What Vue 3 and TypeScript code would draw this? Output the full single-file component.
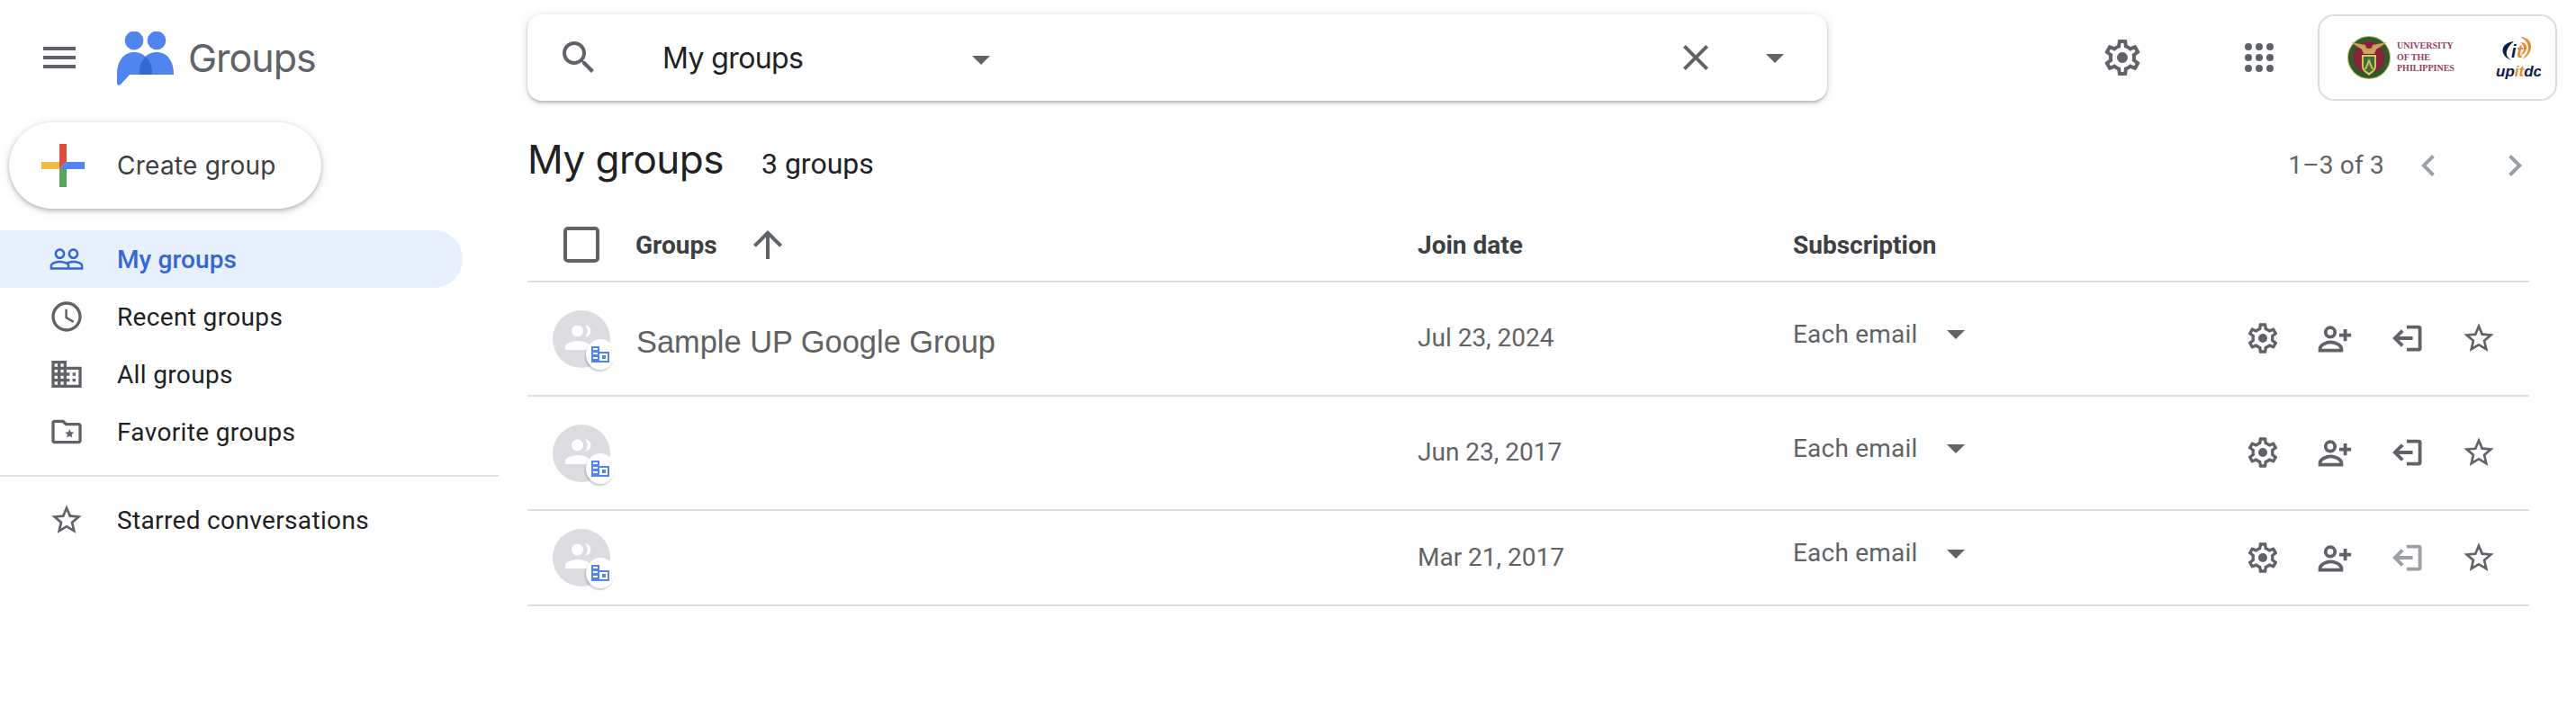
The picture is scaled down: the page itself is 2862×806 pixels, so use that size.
<script setup lang="ts">
const P = {
  menu: 'M3 18h18v-2H3v2zm0-5h18v-2H3v2zm0-7v2h18V6H3z',
  search: 'M15.5 14h-.79l-.28-.27C15.41 12.59 16 11.11 16 9.5 16 5.91 13.09 3 9.5 3S3 5.91 3 9.5 5.91 16 9.5 16c1.61 0 3.09-.59 4.23-1.57l.27.28v.79l5 4.99L20.49 19l-4.99-5zm-6 0C7.01 14 5 11.99 5 9.5S7.01 5 9.5 5 14 7.01 14 9.5 11.99 14 9.5 14z',
  close: 'M19 6.41L17.59 5 12 10.59 6.41 5 5 6.41 10.59 12 5 17.59 6.41 19 12 13.41 17.59 19 19 17.59 13.41 12z',
  drop: 'M7 10l5 5 5-5z',
  gear: 'M19.43 12.98c.04-.32.07-.64.07-.98 0-.34-.03-.66-.07-.98l2.11-1.65c.19-.15.24-.42.12-.64l-2-3.46c-.09-.16-.26-.25-.44-.25-.06 0-.12.01-.17.03l-2.49 1c-.52-.4-1.08-.73-1.69-.98l-.38-2.65C14.46 2.18 14.25 2 14 2h-4c-.25 0-.46.18-.49.42l-.38 2.65c-.61.25-1.17.59-1.69.98l-2.49-1c-.06-.02-.12-.03-.18-.03-.17 0-.34.09-.43.25l-2 3.46c-.13.22-.07.49.12.64l2.11 1.65c-.04.32-.07.65-.07.98 0 .33.03.66.07.98l-2.11 1.65c-.19.15-.24.42-.12.64l2 3.46c.09.16.26.25.44.25.06 0 .12-.01.17-.03l2.49-1c.52.4 1.08.73 1.69.98l.38 2.65c.03.24.24.42.49.42h4c.25 0 .46-.18.49-.42l.38-2.65c.61-.25 1.17-.59 1.69-.98l2.49 1c.06.02.12.03.18.03.17 0 .34-.09.43-.25l2-3.46c.12-.22.07-.49-.12-.64l-2.11-1.65zm-1.98-1.71c.04.31.05.52.05.73 0 .21-.02.43-.05.73l-.14 1.13.89.7 1.08.84-.7 1.21-1.27-.51-1.04-.42-.9.68c-.43.32-.84.56-1.25.73l-1.06.43-.16 1.13-.2 1.35h-1.4l-.19-1.35-.16-1.13-1.06-.43c-.43-.18-.83-.41-1.23-.71l-.91-.7-1.06.43-1.27.51-.7-1.21 1.08-.84.89-.7-.14-1.13c-.03-.31-.05-.54-.05-.74s.02-.43.05-.73l.14-1.13-.89-.7-1.08-.84.7-1.21 1.27.51 1.04.42.9-.68c.43-.32.84-.56 1.25-.73l1.06-.43.16-1.13.2-1.35h1.39l.19 1.35.16 1.13 1.06.43c.43.18.83.41 1.23.71l.91.7 1.06-.43 1.27-.51.7 1.21-1.07.85-.89.7.14 1.13zM12 9a3 3 0 1 0 0 6 3 3 0 0 0 0-6z',
  prev: 'M15.41 7.41L14 6l-6 6 6 6 1.41-1.41L10.83 12z',
  next: 'M10 6L8.59 7.41 13.17 12l-4.58 4.59L10 18l6-6z',
  up: 'M4 12l1.41 1.41L11 7.83V20h2V7.83l5.58 5.59L20 12l-8-8-8 8z',
  star: 'M22 9.24l-7.19-.62L12 2 9.19 8.63 2 9.24l5.46 4.73L5.82 21 12 17.27 18.18 21l-1.63-7.03L22 9.24zM12 15.4l-3.76 2.27 1-4.28-3.32-2.88 4.38-.38L12 6.1l1.71 4.04 4.38.38-3.32 2.88 1 4.28L12 15.4z',
  people: 'M16.5 13c-1.2 0-3.07.34-4.5 1-1.43-.67-3.3-1-4.5-1C5.33 13 1 14.08 1 16.25V19h22v-2.75c0-2.17-4.33-3.25-6.5-3.25zm-4 4.5h-10v-1.25c0-.54 2.56-1.75 5-1.75s5 1.21 5 1.75v1.25zm9 0H14v-1.25c0-.46-.2-.86-.52-1.22.88-.3 1.96-.53 3.02-.53 2.44 0 5 1.21 5 1.75v1.25zM7.5 12c1.93 0 3.5-1.57 3.5-3.5S9.43 5 7.5 5 4 6.57 4 8.5 5.57 12 7.5 12zm0-5.5c1.1 0 2 .9 2 2s-.9 2-2 2-2-.9-2-2 .9-2 2-2zm9 5.5c1.93 0 3.5-1.57 3.5-3.5S18.43 5 16.5 5 13 6.57 13 8.5s1.57 3.5 3.5 3.5zm0-5.5c1.1 0 2 .9 2 2s-.9 2-2 2-2-.9-2-2 .9-2 2-2z',
  clock: 'M11.99 2C6.47 2 2 6.48 2 12s4.47 10 9.99 10C17.52 22 22 17.52 22 12S17.52 2 11.99 2zM12 20c-4.42 0-8-3.58-8-8s3.58-8 8-8 8 3.58 8 8-3.58 8-8 8zm.5-13H11v6l5.25 3.15.75-1.23-4.5-2.67z',
  domain: 'M12 7V3H2v18h20V7H12zM6 19H4v-2h2v2zm0-4H4v-2h2v2zm0-4H4V9h2v2zm0-4H4V5h2v2zm4 12H8v-2h2v2zm0-4H8v-2h2v2zm0-4H8V9h2v2zm0-4H8V5h2v2zm10 12h-8v-2h2v-2h-2v-2h2v-2h-2V9h8v10zm-2-8h-2v2h2v-2zm0 4h-2v2h2v-2z',
  folder: 'M20 6h-8l-2-2H4c-1.1 0-2 .9-2 2v12c0 1.1.9 2 2 2h16c1.1 0 2-.9 2-2V8c0-1.1-.9-2-2-2zm0 12H4V6h5.17l2 2H20v10zM14 10.2l.85 2 2.15.2-1.63 1.4.5 2.1-1.87-1.12-1.87 1.12.5-2.1L11 12.4l2.15-.2z',
}

const nav = [
  { label: 'Recent groups', icon: P.clock },
  { label: 'All groups', icon: P.domain },
  { label: 'Favorite groups', icon: P.folder },
]

const rows = [
  { name: 'Sample UP Google Group', date: 'Jul 23, 2024', canLeave: true },
  { name: '', date: 'Jun 23, 2017', canLeave: true },
  { name: '', date: 'Mar 21, 2017', canLeave: false },
]

const dots = [6, 12, 18]
</script>

<template>
  <div class="page">
    <aside class="side">
      <div class="brand">
        <button class="iconbox menu" aria-label="Main menu">
          <svg viewBox="0 0 24 24" class="i48"><path :d="P.menu" /></svg>
        </button>
        <svg class="logo" viewBox="0 0 63 60" aria-hidden="true">
          <circle cx="19" cy="10" r="10.4" fill="#5084ee" />
          <circle cx="44" cy="10" r="10.3" fill="#5084ee" />
          <path d="M0 48C0 32 8 23 19 23c12 0 20 10 20 25H14L4 59c-2 1.500-4 .5-4-2z" fill="#5084ee" />
          <path d="M24 48c0-15 8-25 20-25s19 10 19 25z" fill="#5084ee" />
          <path d="M32 28c4 4 7 10 7 16v4H25v-4c0-6 3-12 7-16z" fill="#3367d6" />
        </svg>
        <span class="brand-name">Groups</span>
      </div>
      <button class="create">
        <svg class="plus" viewBox="0 0 48 48" aria-hidden="true">
          <polygon points="20,0 28,0 28,20 20,28" fill="#d9503f" />
          <polygon points="28,20 48,20 48,28 20,28" fill="#5084ee" />
          <polygon points="20,28 28,28 28,48 20,48" fill="#5aa55a" />
          <polygon points="0,20 20,20 20,28 0,28" fill="#f0bd44" />
        </svg>
        <span>Create group</span>
      </button>
      <nav class="nav">
        <a class="nav-item active">
          <span class="iconbox"><svg viewBox="0 0 24 24" class="i40"><path :d="P.people" /></svg></span>
          <span>My groups</span>
        </a>
        <a v-for="item in nav" :key="item.label" class="nav-item">
          <span class="iconbox"><svg viewBox="0 0 24 24" class="i40"><path :d="item.icon" /></svg></span>
          <span>{{ item.label }}</span>
        </a>
      </nav>
      <div class="divider"></div>
      <a class="nav-item">
        <span class="iconbox"><svg viewBox="0 0 24 24" class="i40"><path :d="P.star" /></svg></span>
        <span>Starred conversations</span>
      </a>
    </aside>

    <main class="main">
      <header class="top">
        <div class="searchbar">
          <span class="iconbox"><svg viewBox="0 0 24 24" class="i48"><path :d="P.search" /></svg></span>
          <div class="scope">
            <span>My groups</span>
            <span class="iconbox low"><svg viewBox="0 0 24 24" class="i48"><path :d="P.drop" /></svg></span>
          </div>
          <span class="iconbox clear"><svg viewBox="0 0 24 24" class="i48"><path :d="P.close" /></svg></span>
          <span class="iconbox"><svg viewBox="0 0 24 24" class="i48"><path :d="P.drop" /></svg></span>
        </div>
        <span class="iconbox settings"><svg viewBox="0 0 24 24" class="i48"><path :d="P.gear" /></svg></span>
        <span class="iconbox apps">
          <svg viewBox="0 0 24 24" class="i48">
            <template v-for="y in dots" :key="y">
              <circle v-for="x in dots" :key="x" :cx="x" :cy="y" r="2" />
            </template>
          </svg>
        </span>
        <div class="org">
          <svg class="seal" viewBox="0 0 48 48" aria-hidden="true">
            <circle cx="24" cy="24" r="24" fill="#c9b458" />
            <circle cx="24" cy="24" r="23" fill="#2f5a2c" />
            <circle cx="24" cy="24" r="17.500" fill="#8a1f3c" />
            <path d="M4 7l16 3 4-3 4 3 16-3-12 8-2 5h-12l-2-5z" fill="#c9a35a" />
            <circle cx="24" cy="10" r="4" fill="#8a1f3c" />
            <path d="M16 21h16v13c0 4-4 7-8 10-4-3-8-6-8-10z" fill="#d8c35c" />
            <path d="M18 23h12v11c0 3-3 5-6 7-3-2-6-4-6-7z" fill="#3f6d36" />
            <path d="M24 25l5 12h-2l-3-7-3 7h-2z" fill="#d8c35c" />
          </svg>
          <div class="org-text">
            <span>UNIVERSITY</span>
            <span>OF THE</span>
            <span>PHILIPPINES</span>
          </div>
          <svg class="itdc" viewBox="0 0 50 48" aria-hidden="true">
            <path d="M20 6C11 7 6 12 8 19c1 3 4 6 9 8-4-3-6-6-5-10 1-4 4-8 8-11z" fill="#101b4c" />
            <path d="M27 1c8 0 12 5 12 11 0 6-4 11-10 14 4-4 7-8 7-13 0-5-3-9-9-12z" fill="#e68a2e" />
            <path d="M27 7c5 0 7 3 7 6 0 4-3 7-7 9 2-3 4-5 4-8s-1-5-4-7z" fill="#e68a2e" />
            <text x="17" y="24" class="itdc-mark">i</text>
            <text x="23" y="24" class="itdc-mark orange">t</text>
            <text x="0" y="45" class="itdc-word">up<tspan fill="#e68a2e">it</tspan>dc</text>
          </svg>
        </div>
      </header>

      <div class="title-row">
        <h1>My groups</h1>
        <span class="count">3 groups</span>
        <div class="pager">
          <span class="range">1–3 of 3</span>
          <span class="iconbox soft"><svg viewBox="0 0 24 24" class="i48"><path :d="P.prev" /></svg></span>
          <span class="iconbox soft"><svg viewBox="0 0 24 24" class="i48"><path :d="P.next" /></svg></span>
        </div>
      </div>

      <div class="table">
        <div class="row head">
          <div class="cell-name">
            <span class="check"></span>
            <span class="head-label">Groups</span>
            <span class="iconbox sort"><svg viewBox="0 0 24 24" class="i48"><path :d="P.up" /></svg></span>
          </div>
          <div>Join date</div>
          <div>Subscription</div>
          <div></div>
        </div>
        <div v-for="row in rows" :key="row.date" class="row body">
          <div class="cell-name">
            <div class="avatar">
              <svg viewBox="0 0 64 64" class="avatar-art" aria-hidden="true">
                <circle cx="27.500" cy="23" r="6.500" fill="#fff" />
                <path d="M36 16.500a6.500 6.500 0 0 1 0 13c1.800-1.800 2.700-4 2.700-6.500s-.9-4.700-2.700-6.500z" fill="#fff" />
                <path d="M14 44v-3c0-5 9-7 14-7s14 2 14 7v3z" fill="#fff" />
              </svg>
              <span class="badge">
                <svg viewBox="0 0 20 18" class="badge-art" aria-hidden="true">
                  <path fill-rule="evenodd" d="M0 0h9v6h11v12H0zM2 2v2h5V2zM2 7v2h5V7zM2 12v2h5v-2zM9 8v8h9V8zM12 10h4v4h-4z" />
                </svg>
              </span>
            </div>
            <span class="group-name">{{ row.name }}</span>
          </div>
          <div class="date">{{ row.date }}</div>
          <div class="sub">
            <span>Each email</span>
            <span class="iconbox"><svg viewBox="0 0 24 24" class="i48"><path :d="P.drop" /></svg></span>
          </div>
          <div class="actions">
            <span class="iconbox"><svg viewBox="0 0 24 24" class="i40"><path :d="P.gear" /></svg></span>
            <span class="iconbox">
              <svg viewBox="0 0 24 24" class="line">
                <circle cx="9.500" cy="8.700" r="2.600" />
                <path d="M3.800 18.800v-.9c0-2.300 3.800-3.700 5.900-3.700s6 1.400 6 3.700v.9z" />
                <path d="M17.800 7v6.600M14.500 10.300h6.600" />
              </svg>
            </span>
            <span class="iconbox" :class="{ disabled: !row.canLeave }">
              <svg viewBox="0 0 24 24" class="line">
                <path d="M12 5.800h6.600c.4 0 .7.300.7.700v11.100c0 .4-.3.700-.7.700H12" />
                <path d="M15.300 12H5.500M9.600 7.800 5.400 12l4.200 4.200" />
              </svg>
            </span>
            <span class="iconbox"><svg viewBox="0 0 24 24" class="i40"><path :d="P.star" /></svg></span>
          </div>
        </div>
      </div>
    </main>
  </div>
</template>

<style>
html, body { margin: 0; background: #fff; overflow: hidden; }
</style>

<style scoped>
.page {
  display: flex;
  width: 2862px;
  height: 806px;
  overflow: hidden;
  background: #fff;
  color: #202124;
  font-family: Roboto, "Liberation Sans", sans-serif;
  font-size: 28px;
}
button { border: 0; background: none; padding: 0; font: inherit; color: inherit; }
svg { fill: #5f6368; display: block; }
.iconbox { display: flex; align-items: center; justify-content: center; width: 48px; height: 48px; flex: none; }
.i48 { width: 48px; height: 48px; }
.i40 { width: 40px; height: 40px; }
.line { width: 48px; height: 48px; fill: none; stroke: #5f6368; stroke-width: 1.9; }
.disabled .line { stroke: #9aa0a6; }
.soft svg { fill: #9aa0a6; }

.side { width: 586px; flex: none; }
.brand { display: flex; align-items: center; height: 128px; padding-left: 42px; }
.logo { width: 63px; height: 60px; margin-left: 40px; margin-top: 2px; }
.brand-name { margin-left: 16px; font-family: Inter, sans-serif; font-size: 43px; color: #5f6368; letter-spacing: -1px; }
.create {
  display: flex;
  align-items: center;
  width: 347px;
  height: 96px;
  margin: 8px 0 0 10px;
  padding-left: 36px;
  border-radius: 48px;
  background: #fff;
  box-shadow: 0 2px 4px rgba(60, 64, 67, .3), 0 2px 8px 2px rgba(60, 64, 67, .12);
  box-sizing: border-box;
  font-family: Inter, sans-serif;
  letter-spacing: .25px;
  color: #3c4043;
}
.plus { width: 48px; height: 48px; margin-right: 36px; }
.nav { margin-top: 24px; }
.nav-item { display: flex; align-items: center; width: 514px; height: 64px; padding-left: 50px; box-sizing: border-box; gap: 32px; letter-spacing: .35px; }
.nav-item.active { background: #e8f0fe; border-radius: 0 32px 32px 0; color: #3367d6; font-weight: 500; letter-spacing: .1px; }
.nav-item.active svg { fill: #3367d6; }
.divider { width: 554px; height: 2px; margin: 16px 0; background: #e0e0e0; }

.main { flex: 1; min-width: 0; padding-right: 52px; box-sizing: border-box; }
.top { display: flex; align-items: flex-start; height: 128px; padding-top: 16px; box-sizing: border-box; width: 2276px; }
.searchbar {
  display: flex;
  align-items: center;
  width: 1444px;
  height: 96px;
  padding: 0 34px 0 33px;
  box-sizing: border-box;
  border-radius: 16px;
  background: #fff;
  box-shadow: 0 2px 3px rgba(60, 64, 67, .3), 0 1px 8px 1px rgba(60, 64, 67, .15);
  font-family: Inter, sans-serif;
  font-size: 32px;
}
.scope { display: flex; align-items: center; justify-content: space-between; width: 378px; margin-left: 69px; letter-spacing: -.6px; }
.low { margin-top: 4px; }
.clear { margin-left: auto; margin-right: 40px; }
.settings { margin: 24px 0 0 304px; }
.apps { margin: 24px 0 0 104px; }
.org {
  display: flex;
  align-items: center;
  width: 266px;
  height: 96px;
  margin-left: 41px;
  padding-left: 31px;
  box-sizing: border-box;
  border: 2px solid #dadce0;
  border-radius: 18px;
}
.seal { width: 48px; height: 48px; margin-right: 7px; }
.org-text { display: flex; flex-direction: column; width: 110px; font-family: "Liberation Serif", serif; font-size: 10px; line-height: 12.500px; font-weight: 700; color: #94415f; }
.itdc { width: 50px; height: 48px; }
.itdc-mark { font-family: "Liberation Sans", sans-serif; font-style: italic; font-weight: 700; font-size: 20px; fill: #101b4c; }
.itdc-mark.orange { fill: #e68a2e; }
.itdc-word { font-family: "Liberation Sans", sans-serif; font-style: italic; font-weight: 700; font-size: 17px; fill: #101b4c; }

.title-row { display: flex; align-items: baseline; height: 104px; padding-top: 19px; box-sizing: border-box; width: 2232px; }
h1 { margin: 0; font-family: Inter, sans-serif; font-size: 44px; line-height: 60px; font-weight: 400; letter-spacing: -.5px; }
.count { margin-left: 42px; font-size: 32px; }
.pager { display: flex; align-items: center; margin-left: auto; line-height: 48px; color: #5f6368; }
.range { margin-right: 25px; letter-spacing: .2px; }
.pager .iconbox + .iconbox { margin-left: 48px; }

.table { width: 2224px; }
.row { display: grid; grid-template-columns: 989px 417px 1fr 400px; align-items: center; box-sizing: border-box; border-bottom: 2px solid #dfdfdf; }
.head { height: 82px; font-weight: 700; color: #3c4043; font-size: 28px; }
.body { height: 127px; color: #5f6368; }
.body:last-child { height: 106px; }
.cell-name { display: flex; align-items: center; }
.check { width: 40px; height: 40px; margin-left: 40px; border: 4px solid #5f6368; border-radius: 5px; box-sizing: border-box; }
.head-label { margin-left: 40px; }
.sort { margin-left: 32px; }
.avatar { position: relative; width: 64px; height: 64px; margin-left: 28px; border-radius: 50%; background: #dadce0; }
.avatar-art { width: 64px; height: 64px; }
.badge {
  position: absolute;
  left: 37px;
  top: 32px;
  display: flex;
  align-items: center;
  justify-content: center;
  width: 32px;
  height: 34px;
  border-radius: 50%;
  background: #fff;
  box-shadow: -1px 2px 2px rgba(60, 64, 67, .25);
}
.badge-art { width: 20px; height: 18px; fill: #5084ee; }
.group-name { margin: 8px 0 0 29px; font-family: "Liberation Sans", sans-serif; font-size: 34.400px; color: #616161; }
.date { margin-top: -2px; }
.sub { display: flex; align-items: center; margin-bottom: 11px; letter-spacing: .2px; }
.sub .iconbox { margin-left: 19px; }
.actions { display: flex; justify-content: flex-end; gap: 32px; padding-right: 32px; margin-bottom: 1px; }
</style>
